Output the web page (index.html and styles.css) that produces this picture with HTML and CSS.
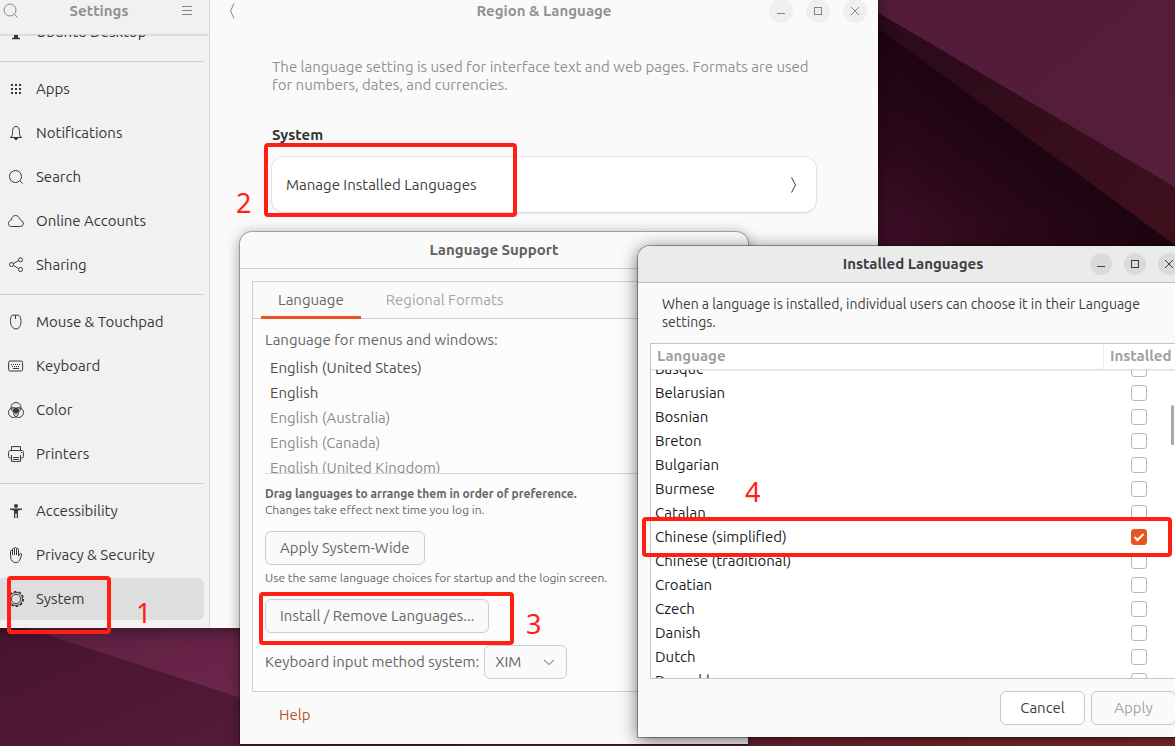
FILE: index.html
```html
<!DOCTYPE html>
<html lang="en">
<head>
<meta charset="utf-8">
<title>Region &amp; Language</title>
<link rel="stylesheet" href="styles.css">
</head>
<body>
<div class="desktop">
  <svg class="wallpaper" viewBox="0 0 1175 746" preserveAspectRatio="none" aria-hidden="true">
    <defs>
      <linearGradient id="w1" x1="0" y1="0" x2="1" y2="1"><stop offset="0" stop-color="#521c3a"/><stop offset=".75" stop-color="#541e3b"/><stop offset="1" stop-color="#5e2038"/></linearGradient>
      <linearGradient id="w2" gradientUnits="userSpaceOnUse" x1="1010" y1="115" x2="880" y2="290"><stop offset="0" stop-color="#1c0410"/><stop offset=".45" stop-color="#2d081a"/><stop offset="1" stop-color="#4a1431"/></linearGradient>
      <linearGradient id="w3" x1="0" y1="0" x2="1" y2="1"><stop offset="0" stop-color="#290a1b"/><stop offset="1" stop-color="#40101c"/></linearGradient>
      <linearGradient id="w4" x1="0" y1="0" x2="1" y2="1"><stop offset="0" stop-color="#461330"/><stop offset="1" stop-color="#571b3b"/></linearGradient>
      <linearGradient id="w5" x1="0" y1="0" x2="1" y2="0"><stop offset="0" stop-color="#541c3c"/><stop offset="1" stop-color="#862c2a"/></linearGradient>
      <linearGradient id="w6" x1="0" y1="0" x2="1" y2="1"><stop offset="0" stop-color="#5c1f40"/><stop offset="1" stop-color="#72284f"/></linearGradient>
    </defs>
    <rect x="870" width="305" height="260" fill="url(#w1)"/>
    <path d="M870 8 1175 187V260H870z" fill="url(#w3)"/>
    <path d="M870 22 1175 245V260H870z" fill="url(#w2)"/>
    <rect y="620" width="300" height="126" fill="url(#w4)"/>
    <path d="M20 626H300V717z" fill="url(#w6)"/>
    <rect x="240" y="730" width="935" height="16" fill="url(#w5)"/>
  </svg>

  <main class="window settings">
    <aside class="sidebar">
      <header class="sidebar-head">
        <button class="icon-btn" aria-label="Search settings"><svg width="16" height="16" viewBox="0 0 16 16"><circle cx="7" cy="7" r="6"/><path d="m11.500 11.500 3 3"/></svg></button>
        <h2>Settings</h2>
        <button class="icon-btn" aria-label="Menu"><svg width="16" height="16" viewBox="0 0 16 16"><path d="M3 3.500h10M3 7.500h10M3 11.500h10"/></svg></button>
      </header>
      <nav class="nav">
        <a href="#"><svg width="16" height="16" viewBox="0 0 16 16"><rect x=".5" y="1.500" width="15" height="9" rx="2"/><path d="M6 11h4v3H6z" class="fill"/><path d="M4 14.500h8" stroke-width="1.500"/></svg>Ubuntu Desktop</a>
        <hr>
        <a href="#"><svg width="16" height="16" viewBox="0 0 16 16"><path d="M3 4h2M7 4h2M11 4h2M3 8h2M7 8h2M11 8h2M3 12h2M7 12h2M11 12h2" stroke-width="2"/></svg>Apps</a>
        <a href="#"><svg width="16" height="16" viewBox="0 0 16 16"><path d="M2 12.500h12M3.500 12c1-1.500 1-3 1-5.500C4.500 3.500 5.500 1.500 8 1.500s3.500 2 3.500 5c0 2.500 0 4 1 5.500"/><path d="M6.500 13.500h3c0 1.500-3 1.500-3 0z" class="solid"/></svg>Notifications</a>
        <a href="#"><svg width="16" height="16" viewBox="0 0 16 16"><circle cx="7.500" cy="7.500" r="6"/><path d="m12 12 2.500 2.500"/></svg>Search</a>
        <a href="#"><svg width="16" height="16" viewBox="0 0 16 16"><path d="M3.500 13.500h9a3 3 0 0 0 1.500-5.500c-1-.6-1.500-.5-2-2C11.300 4 9.500 2.500 7.500 2.500 5 2.500 3.500 4.500 3.500 7 1.500 7.500.5 8.500.5 10.500s1.200 3 3 3z"/></svg>Online Accounts</a>
        <a href="#"><svg width="16" height="16" viewBox="0 0 16 16"><circle cx="3.500" cy="7.500" r="2"/><circle cx="12.500" cy="2.800" r="2"/><circle cx="12.500" cy="12.500" r="2"/><path d="m5.400 6.500 5.200-2.800M5.400 8.500l5.200 3"/></svg>Sharing</a>
        <hr>
        <a href="#"><svg width="16" height="16" viewBox="0 0 16 16"><path d="M5 1.200h5c2 0 3 2.600 3 6.300 0 4-2 7.500-5 7.500s-5.500-3.500-5.500-7.500c0-3.700.5-6.300 2.500-6.300zM7.500 1v4"/></svg>Mouse &amp; Touchpad</a>
        <a href="#"><svg width="16" height="16" viewBox="0 0 16 16"><rect x=".6" y="3" width="14" height="10" rx="1.500"/><path d="M3 6.500h10M4 8.500h8" stroke-dasharray="1 1"/><path d="M5 10.500h6"/></svg>Keyboard</a>
        <a href="#"><svg width="16" height="16" viewBox="0 0 16 16"><path d="M4 6h8l-1 4-3 3-3-3z" class="shade"/><path d="M6 7h4v2l-2 1.500L6 9z" class="solid"/><circle cx="8" cy="5.500" r="5"/><circle cx="5.500" cy="10.500" r="5"/><circle cx="10.500" cy="10.500" r="5"/></svg>Color</a>
        <a href="#"><svg width="16" height="16" viewBox="0 0 16 16"><path d="M3.500 4V.6h9V4M3 12H2C1 12 .6 11 .6 10V6.500C.6 5.500 1 4.500 2 4.500h12c1 0 1.400 1 1.400 2V10c0 1-.4 2-1.400 2h-1M3.500 9v6.400h9V9M5 11.500h6M5 13.500h6M13 6.500h1"/></svg>Printers</a>
        <hr>
        <a href="#"><svg width="16" height="16" viewBox="0 0 16 16"><circle cx="8" cy="3" r="2" class="fill"/><path d="M2 5.500h12v1.200l-4 .8V15H8.700v-4.500H7.300V15H6V7.500l-4-.8z" class="fill"/></svg>Accessibility</a>
        <a href="#"><svg width="16" height="16" viewBox="0 0 16 16"><path d="M2.500 7.500v-3c0-1.500 2-1.500 2 0V8M4.500 7V2.500c0-1.600 2-1.600 2 0V8M6.500 7V1.500c0-1.400 2-1.400 2 0V8M8.500 7V2.500c0-1.500 2-1.500 2 0V9l1.200-2c.8-1.300 2.300-.5 1.800 1l-1.700 5c-.6 1.500-1.800 2.500-4 2.500-3 0-4.800-2-5-4.500L2.500 7"/></svg>Privacy &amp; Security</a>
        <a href="#" class="active"><svg width="16" height="16" viewBox="0 0 16 16"><circle cx="8" cy="8" r="4.700"/><circle cx="8" cy="8" r="6.500"/><circle cx="8" cy="8" r="7.300" stroke-width="1.500" stroke-dasharray="2.500 2.100"/></svg>System</a>
      </nav>
    </aside>
    <section class="pane">
      <header class="pane-head">
        <button class="icon-btn" aria-label="Back"><svg width="16" height="16" viewBox="0 0 16 16"><path d="M10 .5 6.500 8l3.500 7.500"/></svg></button>
        <h1>Region &amp; Language</h1>
        <div class="controls">
          <button aria-label="Minimize"><svg width="16" height="16" viewBox="0 0 16 16"><path d="M4 10.500h8"/></svg></button>
          <button aria-label="Maximize"><svg width="16" height="16" viewBox="0 0 16 16"><rect x="4.500" y="4.500" width="7" height="7"/></svg></button>
          <button aria-label="Close"><svg width="16" height="16" viewBox="0 0 16 16"><path d="m4 4 8 8M12 4l-8 8"/></svg></button>
        </div>
      </header>
      <div class="pane-body">
        <p>The language setting is used for interface text and web pages. Formats are used for numbers, dates, and currencies.</p>
        <h3>System</h3>
        <button class="card">Manage Installed Languages<svg width="16" height="16" viewBox="0 0 16 16"><path d="M5.500.5 9.500 8l-4 7.500"/></svg></button>
      </div>
    </section>
  </main>

  <section class="window support">
    <header class="title"><h2>Language Support</h2></header>
    <div class="notebook">
      <div class="tabs" role="tablist">
        <button role="tab" aria-selected="true">Language</button>
        <button role="tab" aria-selected="false">Regional Formats</button>
      </div>
      <div class="tab-body">
        <p>Language for menus and windows:</p>
        <ul class="langs">
          <li>English (United States)</li>
          <li>English</li>
          <li class="dim">English (Australia)</li>
          <li class="dim">English (Canada)</li>
          <li class="dim">English (United Kingdom)</li>
        </ul>
        <p class="hint"><b>Drag languages to arrange them in order of preference.</b><br>Changes take effect next time you log in.</p>
        <button class="btn">Apply System-Wide</button>
        <p class="hint under">Use the same language choices for startup and the login screen.</p>
        <button class="btn">Install / Remove Languages...</button>
        <div class="method">
          <label for="ime">Keyboard input method system:</label>
          <span class="combo"><select id="ime"><option>XIM</option><option>IBus</option></select><svg width="16" height="16" viewBox="0 0 16 16"><path d="m3 6 5 4.500L13 6"/></svg></span>
        </div>
      </div>
    </div>
    <a class="help" href="#">Help</a>
  </section>

  <section class="window installed">
    <header class="title">
      <h2>Installed Languages</h2>
      <div class="controls">
        <button aria-label="Minimize"><svg width="16" height="16" viewBox="0 0 16 16"><path d="M4 10.500h8"/></svg></button>
        <button aria-label="Maximize"><svg width="16" height="16" viewBox="0 0 16 16"><rect x="4.500" y="4.500" width="7" height="7"/></svg></button>
        <button aria-label="Close"><svg width="16" height="16" viewBox="0 0 16 16"><path d="m4 4 8 8M12 4l-8 8"/></svg></button>
      </div>
    </header>
    <p class="intro">When a language is installed, individual users can choose it in their Language settings.</p>
    <div class="list">
      <table>
        <thead><tr><th>Language</th><th>Installed</th></tr></thead>
        <tbody>
          <tr><td><label for="l1">Basque</label></td><td><input type="checkbox" id="l1"></td></tr>
          <tr><td><label for="l2">Belarusian</label></td><td><input type="checkbox" id="l2"></td></tr>
          <tr><td><label for="l3">Bosnian</label></td><td><input type="checkbox" id="l3"></td></tr>
          <tr><td><label for="l4">Breton</label></td><td><input type="checkbox" id="l4"></td></tr>
          <tr><td><label for="l5">Bulgarian</label></td><td><input type="checkbox" id="l5"></td></tr>
          <tr><td><label for="l6">Burmese</label></td><td><input type="checkbox" id="l6"></td></tr>
          <tr><td><label for="l7">Catalan</label></td><td><input type="checkbox" id="l7"></td></tr>
          <tr><td><label for="l8">Chinese (simplified)</label></td><td class="on"><input type="checkbox" id="l8" checked><svg width="16" height="16" viewBox="0 0 16 16"><path d="m3.500 8 3 3 6-6"/></svg></td></tr>
          <tr><td><label for="l9">Chinese (traditional)</label></td><td><input type="checkbox" id="l9"></td></tr>
          <tr><td><label for="l10">Croatian</label></td><td><input type="checkbox" id="l10"></td></tr>
          <tr><td><label for="l11">Czech</label></td><td><input type="checkbox" id="l11"></td></tr>
          <tr><td><label for="l12">Danish</label></td><td><input type="checkbox" id="l12"></td></tr>
          <tr><td><label for="l13">Dutch</label></td><td><input type="checkbox" id="l13"></td></tr>
          <tr><td><label for="l14">Dzongkha</label></td><td><input type="checkbox" id="l14"></td></tr>
        </tbody>
      </table>
      <span class="thumb"></span>
    </div>
    <footer class="actions"><button class="btn strong">Cancel</button><button class="btn" disabled>Apply</button></footer>
  </section>

  <div class="mark m1"></div><span class="num n1">1</span>
  <div class="mark m2"></div><span class="num n2">2</span>
  <div class="mark m3"></div><span class="num n3">3</span>
  <div class="mark m4"></div><span class="num n4">4</span>
</div>
</body>
</html>
```
FILE: styles.css
```css
* { box-sizing: border-box; }
body { margin: 0; }
body, button, select { font: 15px/18px Ubuntu, "Noto Sans", sans-serif; color: #3d3d3d; }
h1, h2, h3, p, ul { margin: 0; padding: 0; }
h1, h2, h3 { font-size: 15px; line-height: 18px; font-weight: 600; }
button { border: 0; background: none; padding: 0; }
a { color: inherit; text-decoration: none; }
svg { display: block; flex: none; fill: none; stroke: currentColor; stroke-width: 1; }
svg .solid { fill: currentColor; }
svg .fill { fill: currentColor; stroke: none; }
svg .shade { fill: #888888; stroke: none; }

.desktop { position: relative; height: 100vh; min-height: 746px; overflow: hidden; background: #47132f; }
.wallpaper { position: absolute; inset: 0; width: 100%; height: 100%; stroke: none; }
.window { position: absolute; display: flex; background: #fafafa; }

/* Settings window, partly above and left of the screen */
.settings { left: -12px; top: -12px; right: 297px; height: 640px; box-shadow: 0 2px 14px rgba(0,0,0,.45); }
.sidebar { display: flex; flex-direction: column; width: 222px; flex: none; background: #f1f1f1; border-right: 1px solid #dcdcdc; }
.sidebar-head, .pane-head { display: flex; align-items: center; justify-content: space-between; height: 46px; flex: none; color: #929292; }
.sidebar-head { height: 47px; padding: 0 14px 0 15px; border-bottom: 1px solid #d8d8d8; box-shadow: 0 1px 1px rgba(0,0,0,.06); z-index: 1; }
.icon-btn { color: #858585; }
.nav { flex: 1; min-height: 0; overflow: hidden; display: flex; flex-direction: column; justify-content: flex-end; gap: 2px; padding: 0 5px 8px 6px; }
.nav a { display: flex; align-items: center; gap: 12px; height: 42px; flex: none; padding: 0 14px; border-radius: 6px; color: #383838; }
.nav a.active { background: #dedede; }
.nav hr { width: 100%; height: 1px; flex: none; margin: 6px 0 4px; border: 0; background: #d0d0d0; }

.pane { flex: 1; min-width: 0; }
.pane-head { position: relative; justify-content: flex-end; padding: 0 11px 0 14px; }
.pane-head .icon-btn { margin-right: auto; }
.pane-head h1, .title h2 { position: absolute; left: 0; right: 0; text-align: center; pointer-events: none; }
.controls { display: flex; gap: 13px; }
.controls button { display: grid; place-items: center; width: 24px; height: 24px; border-radius: 50%; background: #efefef; color: #858585; }
.pane-body { max-width: 544px; margin: 0 auto; padding-top: 24px; color: #919191; }
.pane-body h3 { margin: 32px 0 13px; color: #333333; }
.card { display: flex; align-items: center; justify-content: space-between; width: 100%; height: 55px; padding: 0 14px; border-radius: 12px; background: #ffffff; box-shadow: 0 0 0 1px rgba(0,0,0,.04), 0 1px 3px rgba(0,0,0,.14); }

/* Dialog title bars */
.title { position: relative; display: flex; align-items: center; justify-content: flex-end; height: 37px; flex: none; border-bottom: 1px solid #cfcfcf; }

/* Language Support */
.support { left: 240px; top: 232px; width: 508px; flex-direction: column; border-radius: 12px 12px 0 0; color: #666666; box-shadow: 0 0 0 1px rgba(0,0,0,.25), 0 2px 14px rgba(0,0,0,.4); }
.support .title h2 { color: #606060; }
.notebook { margin: 12px 12px 0; border: 1px solid #cfcfcf; background: #fcfcfc; }
.tabs { display: flex; gap: 8px; padding: 0 8px; height: 37px; border-bottom: 1px solid #cfcfcf; background: #fafafa; }
.tabs button { height: 37px; padding: 2px 17px 0; border-bottom: 3px solid transparent; color: #a6a6a6; }
.tabs button[aria-selected="true"] { color: #666666; border-color: #e95420; }
.tab-body { display: flex; flex-direction: column; align-items: flex-start; padding: 12px; }
.langs { width: 100%; height: 118px; margin: 7px 0 12px; overflow: hidden; list-style: none; border-bottom: 1px solid #d8d8d8; }
.langs li { height: 25px; padding: 3px 5px 4px; border-bottom: 1px solid #f7f7f7; color: #505050; }
.langs li.dim { color: #8c8c8c; }
.hint { margin-bottom: 13px; font-size: 12px; line-height: 16px; }
.hint b { font-weight: 600; }
.hint.under { margin-top: 5px; }
.btn { height: 34px; padding: 0 14px; border: 1px solid #cdcdcd; border-radius: 6px; background: #fafafa; color: #666666; }
.method { display: flex; align-items: center; gap: 5px; margin-top: 12px; }
.combo { position: relative; }
.combo select { appearance: none; width: 83px; height: 34px; padding: 0 10px; border: 1px solid #cdcdcd; border-radius: 6px; background: #fafafa; color: #666666; }
.combo svg { position: absolute; right: 10px; top: 9px; pointer-events: none; }
.help { margin: 14px 0 20px 39px; color: #b9532d; align-self: flex-start; }

/* Installed Languages */
.installed { left: 638px; top: 246px; width: 550px; flex-direction: column; border-radius: 12px 12px 0 0; box-shadow: 0 0 0 1px rgba(0,0,0,.35), 0 3px 18px rgba(0,0,0,.6); }
.installed .title { padding-right: 8px; background: #ebebeb; border-radius: 12px 12px 0 0; border-color: #bfbfbf; }
.installed .controls { gap: 12px; }
.installed .controls button { width: 22px; height: 22px; background: #dadada; color: #3d3d3d; }
.intro { margin: 12px 24px; font-size: 14px; }
.list { position: relative; height: 336px; margin: 0 12px; overflow: hidden; border: 1px solid #c6c6c6; background: #ffffff; }
.list table, .list tbody { display: block; }
.list thead { display: block; position: relative; z-index: 1; background: #ffffff; border-bottom: 1px solid #dddddd; box-shadow: 0 1px 1px rgba(0,0,0,.06); }
.list tr { display: flex; height: 24px; align-items: center; }
.list thead tr { height: 25px; }
.list tbody { margin-top: -13px; color: #1c1c1c; }
.list th, .list td { flex: 1; padding: 0 4px; text-align: left; }
.list th { padding: 3px 6px 4px; font-weight: 600; color: #a0a0a0; }
.list th:last-child, .list td:last-child { flex: none; width: 72px; }
.list th:last-child { padding-right: 0; border-left: 1px solid #f0f0f0; }
.list td:last-child { position: relative; display: grid; place-items: center; padding: 0; }
.list input { appearance: none; width: 16px; height: 16px; margin: 0; border: 1px solid #b8b8b8; border-radius: 3px; background: #ffffff; }
.list input:checked { border-color: #e95420; background: #e95420; }
.on svg { position: absolute; color: #ffffff; stroke-width: 2; pointer-events: none; }
.thumb { position: absolute; right: 1px; top: 61px; width: 3px; height: 40px; border-radius: 2px; background: #a8a8a8; }
.actions { display: flex; justify-content: flex-end; gap: 6px; padding: 12px; }
.actions .btn { width: 85px; border-color: #c6c6c6; }
.actions .strong { background: #ffffff; color: #3d3d3d; }
.actions .btn:disabled { color: #a3a3a3; }

/* Step markers drawn over the windows */
.mark { position: absolute; border: 4px solid #ff2012; border-radius: 4px; }
.m1 { left: 7px; top: 576px; width: 104px; height: 58px; }
.m2 { left: 264px; top: 143px; width: 253px; height: 74px; }
.m3 { left: 259px; top: 592px; width: 255px; height: 53px; }
.m4 { left: 642px; top: 517px; width: 530px; height: 40px; }
.num { position: absolute; font-family: "Noto Sans", sans-serif; font-size: 27px; line-height: 32px; color: #ff2012; }
.n1 { left: 136px; top: 597px; }
.n2 { left: 236px; top: 187px; }
.n3 { left: 526px; top: 608px; }
.n4 { left: 745px; top: 476px; }
```
